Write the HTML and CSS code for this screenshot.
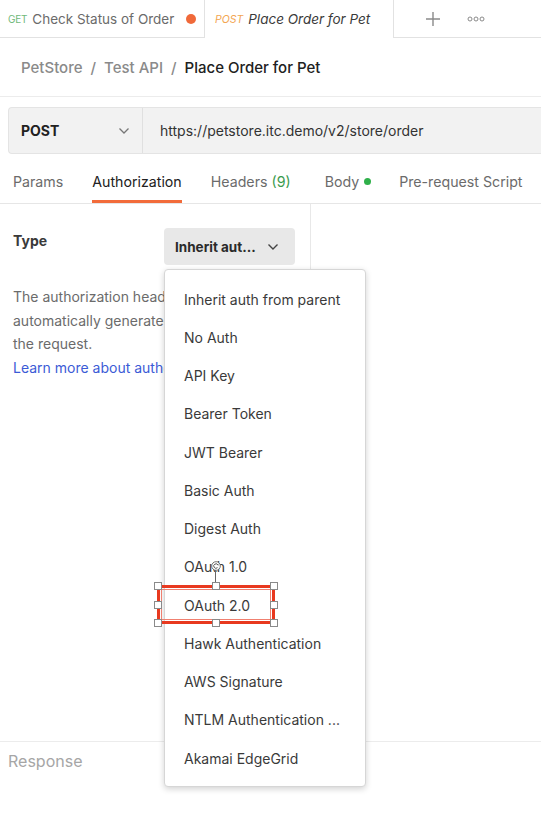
FILE: index.html
```html
<!DOCTYPE html>
<html>
<head>
<meta charset="utf-8">
<link rel="stylesheet" href="styles.css">
</head>
<body>
<div class="app">
  <div class="tabbar">
    <div class="tab tab-inactive">
      <span class="m-get">GET</span>
      <span class="tab-name">Check Status of Order</span>
      <span class="dot-orange"></span>
    </div>
    <div class="tab tab-active">
      <span class="m-post">POST</span>
      <span class="tab-name-active">Place Order for Pet</span>
    </div>
    <div class="tab-actions">
      <svg class="plus" width="16" height="16" viewBox="0 0 16 16"><path d="M8 1v14M1 8h14" stroke="#8a8a8a" stroke-width="1.4" fill="none"/></svg>
      <svg class="more" width="18" height="6" viewBox="0 0 18 6"><circle cx="3" cy="3" r="2" stroke="#8a8a8a" stroke-width="1" fill="none"/><circle cx="9" cy="3" r="2" stroke="#8a8a8a" stroke-width="1" fill="none"/><circle cx="15" cy="3" r="2" stroke="#8a8a8a" stroke-width="1" fill="none"/></svg>
    </div>
  </div>

  <div class="crumbs">
    <span class="crumb">PetStore</span><span class="sep">/</span><span class="crumb">Test API</span><span class="sep">/</span><span class="crumb-current">Place Order for Pet</span>
  </div>

  <div class="urlrow">
    <div class="urlbar">
      <div class="method">
        <span>POST</span>
        <svg width="12" height="8" viewBox="0 0 12 8"><path d="M1.5 1.5l4.5 4.5 4.5-4.5" stroke="#777" stroke-width="1.3" fill="none"/></svg>
      </div>
      <div class="url">https://petstore.itc.demo/v2/store/order</div>
    </div>
  </div>

  <div class="reqtabs">
    <div class="rtab rt-params">Params</div>
    <div class="rtab rtab-active rt-auth">Authorization</div>
    <div class="rtab rt-headers">Headers <span class="green">(9)</span></div>
    <div class="rtab rt-body">Body <span class="dot-green"></span></div>
    <div class="rtab">Pre-request Script</div>
  </div>

  <div class="content">
    <div class="leftpane">
      <div class="typerow">
        <div class="type-label">Type</div>
        <div class="type-btn">
          <span>Inherit aut...</span>
          <svg width="12" height="8" viewBox="0 0 12 8"><path d="M1.5 1.5l4.5 4.5 4.5-4.5" stroke="#444" stroke-width="1.4" fill="none"/></svg>
        </div>
      </div>
      <p class="desc">The authorization header will be automatically generated when you send the request.<br><span class="link">Learn more about authorization</span></p>
    </div>
    <div class="rightpane"></div>
  </div>

  <div class="response">Response</div>

  <div class="menu">
    <div class="item">Inherit auth from parent</div>
    <div class="item">No Auth</div>
    <div class="item">API Key</div>
    <div class="item">Bearer Token</div>
    <div class="item">JWT Bearer</div>
    <div class="item">Basic Auth</div>
    <div class="item">Digest Auth</div>
    <div class="item">OAuth 1.0</div>
    <div class="item">OAuth 2.0</div>
    <div class="item">Hawk Authentication</div>
    <div class="item">AWS Signature</div>
    <div class="item">NTLM Authentication ...</div>
    <div class="item">Akamai EdgeGrid</div>
  </div>

  <div class="selbox">
    <div class="rotline"></div>
    <div class="rot">
      <svg width="10" height="10" viewBox="0 0 10 10"><circle cx="5" cy="5" r="4.3" fill="#fff" stroke="#666" stroke-width="0.9"/><path d="M7 4.2A2.2 2.2 0 1 0 6.5 6.6" stroke="#555" stroke-width="1" fill="none"/><path d="M6 3.4l1.3 1 .2-1.5z" fill="#555"/></svg>
    </div>
    <div class="h h-tl"></div><div class="h h-tm"></div><div class="h h-tr"></div>
    <div class="h h-ml"></div><div class="h h-mr"></div>
    <div class="h h-bl"></div><div class="h h-bm"></div><div class="h h-br"></div>
  </div>
</div>
</body>
</html>
```

FILE: styles.css
```css
* { box-sizing: border-box; }
html, body { margin: 0; padding: 0; background: #fff; }
body {
  font-family: Inter, "Noto Sans", "Liberation Sans", sans-serif;
  width: 541px; height: 814px; overflow: hidden;
  color: #212121;
}
.app { position: relative; width: 541px; height: 814px; overflow: hidden; }

.tabbar { display: flex; height: 38px; }
.tab { display: flex; align-items: center; height: 38px; font-size: 13.5px; white-space: nowrap; }
.tab-inactive {
  width: 204px; padding-left: 8px; border-bottom: 1px solid #e2e2e2; background: #fff;
}
.m-get { color: #6fb97a; font-size: 10px; margin-right: 5px; letter-spacing: -0.2px; }
.tab-name { color: #6b6b6b; }
.dot-orange { width: 10px; height: 10px; border-radius: 50%; background: #f0693a; margin-left: 12px; }
.tab-active {
  width: 190px; padding-left: 10px; border-left: 1px solid #e2e2e2; border-right: 1px solid #e2e2e2;
}
.m-post { color: #f3a652; font-style: italic; font-size: 10.5px; margin-right: 5px; }
.tab-name-active { color: #3a3a3a; font-style: italic; }
.tab-actions {
  flex: 1; display: flex; align-items: center; border-bottom: 1px solid #e2e2e2; padding-left: 31px; gap: 26px;
}

.crumbs {
  height: 59px; display: flex; align-items: center; padding-left: 21px; font-size: 15px;
  border-bottom: 1px solid #ececec; font-weight: 500;
}
.crumb { color: #8a8a8a; }
.sep { color: #8a8a8a; margin: 0 8px; }
.crumb-current { color: #212121; }

.urlrow { padding: 10px 0 0 8px; }
.urlbar {
  height: 47px; display: flex; background: #f2f2f2; border: 1px solid #e4e4e4; border-right: none;
  border-radius: 4px 0 0 4px;
}
.method {
  width: 134px; display: flex; align-items: center; justify-content: space-between;
  padding: 0 12px 0 12px; border-right: 1px solid #e0e0e0; font-weight: 700; font-size: 14px; color: #212121;
}
.url { display: flex; align-items: center; padding-left: 17px; font-size: 14px; color: #333; }

.reqtabs {
  height: 50px; display: flex; align-items: stretch; border-bottom: 1px solid #e6e6e6; padding-left: 13px;
}
.rtab {
  display: flex; align-items: center; font-size: 14.2px; color: #6b6b6b;
  padding-top: 9px; border-bottom: 3px solid transparent; white-space: nowrap; flex-shrink: 0;
}
.rt-params { margin-right: 29px; }
.rt-auth { margin-right: 29px; }
.rt-headers { margin-right: 34px; }
.rt-body { margin-right: 28px; }
.rtab-active { color: #212121; border-bottom-color: #f26b3a; }
.green { color: #3a9b4e; margin-left: 4px; }
.dot-green { width: 7px; height: 7px; border-radius: 50%; background: #2fb04a; margin-left: 5px; }

.content { display: flex; height: 537px; }
.leftpane { width: 311px; border-right: 1px solid #e8e8e8; padding: 24px 13px 0 13px; }
.rightpane { flex: 1; }
.typerow { display: flex; align-items: flex-start; justify-content: space-between; padding-right: 2px; }
.type-label { font-weight: 700; font-size: 14px; color: #3a3a3a; margin-top: 4px; }
.type-btn {
  width: 131px; height: 37px; background: #e8e8e8; border-radius: 4px; display: flex; align-items: center;
  justify-content: space-between; padding: 0 16px 0 11px; font-weight: 700; font-size: 13.5px; color: #2a2a2a;
}
.desc { margin: 20px 0 0 0; font-size: 14px; line-height: 23.5px; color: #6b6b6b; width: 272px; }
.link { color: #3b5bd6; white-space: nowrap; }

.response {
  border-top: 1px solid #ececec; height: 74px; padding: 9px 0 0 8px; font-size: 16px; color: #a6a6a6;
}

.menu {
  position: absolute; left: 164px; top: 269px; width: 202px; height: 518px;
  background: #fff; border: 1px solid #d6d6d6; border-radius: 4px;
  box-shadow: 0 2px 6px rgba(0,0,0,0.18);
  padding: 10px 0 0 0;
}
.item {
  height: 38.25px; display: flex; align-items: center; padding-left: 19px; font-size: 14px; color: #3a3a3a;
}

.selbox {
  position: absolute; left: 157px; top: 585px; width: 118px; height: 39px;
  border: 3px solid #e8391f; outline: 1px solid #f08070; outline-offset: -5px;
}
.h {
  position: absolute; width: 8px; height: 8px; background: #fff; border: 1px solid #8a8a8a;
}
.h-tl { left: -6px; top: -6px; }
.h-tm { left: 52px; top: -6px; }
.h-tr { right: -6px; top: -6px; }
.h-ml { left: -6px; top: 13px; }
.h-mr { right: -6px; top: 13px; }
.h-bl { left: -6px; bottom: -6px; }
.h-bm { left: 52px; bottom: -6px; }
.h-br { right: -6px; bottom: -6px; }
.rotline { position: absolute; left: 55px; top: -18px; width: 1px; height: 14px; background: #666; }
.rot { position: absolute; left: 51px; top: -27px; width: 10px; height: 10px; display: flex; }
```
